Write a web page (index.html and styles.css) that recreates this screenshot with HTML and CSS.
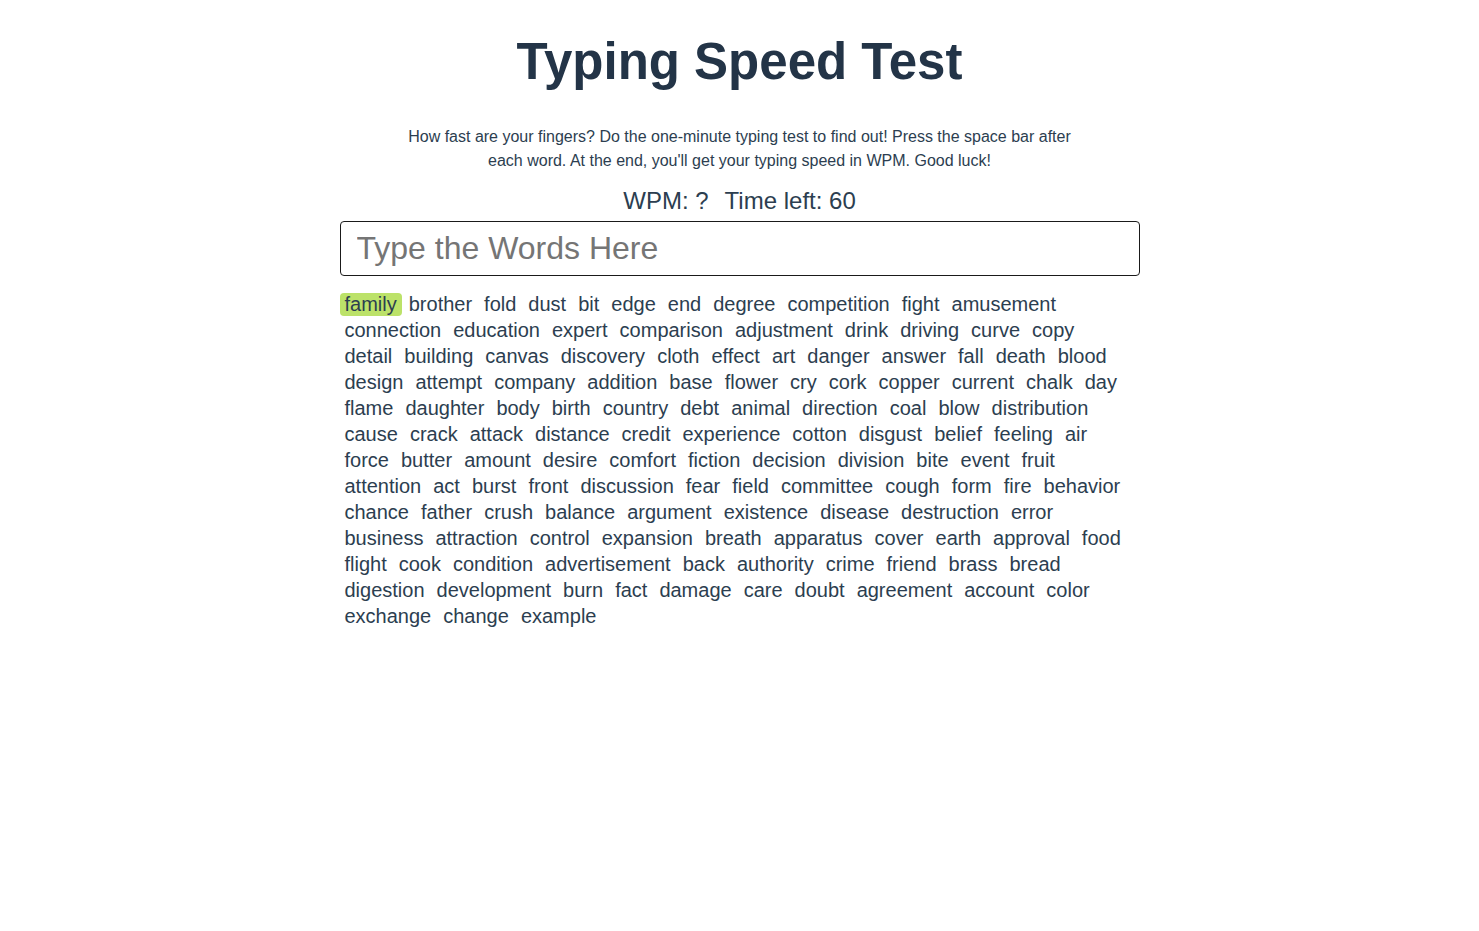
FILE: index.html
```html
<!DOCTYPE html>
<html lang="en">
<head>
<meta charset="utf-8">
<title>Typing Speed Test</title>
<link rel="stylesheet" href="styles.css">
</head>
<body>
<main class="app">
  <h1 class="title">Typing Speed Test</h1>
  <p class="intro">How fast are your fingers? Do the one-minute typing test to find out! Press the space bar after each word. At the end, you'll get your typing speed in WPM. Good luck!</p>
  <div class="stats"><span class="stat">WPM: ?</span><span class="stat">Time left: 60</span></div>
  <input class="entry" type="text" placeholder="Type the Words Here">
  <div class="words">
    <span class="word current">family</span><span class="word">brother</span><span class="word">fold</span><span class="word">dust</span><span class="word">bit</span><span class="word">edge</span><span class="word">end</span><span class="word">degree</span><span class="word">competition</span><span class="word">fight</span><span class="word">amusement</span><span class="word">connection</span><span class="word">education</span><span class="word">expert</span><span class="word">comparison</span><span class="word">adjustment</span><span class="word">drink</span><span class="word">driving</span><span class="word">curve</span><span class="word">copy</span><span class="word">detail</span><span class="word">building</span><span class="word">canvas</span><span class="word">discovery</span><span class="word">cloth</span><span class="word">effect</span><span class="word">art</span><span class="word">danger</span><span class="word">answer</span><span class="word">fall</span><span class="word">death</span><span class="word">blood</span><span class="word">design</span><span class="word">attempt</span><span class="word">company</span><span class="word">addition</span><span class="word">base</span><span class="word">flower</span><span class="word">cry</span><span class="word">cork</span><span class="word">copper</span><span class="word">current</span><span class="word">chalk</span><span class="word">day</span><span class="word">flame</span><span class="word">daughter</span><span class="word">body</span><span class="word">birth</span><span class="word">country</span><span class="word">debt</span><span class="word">animal</span><span class="word">direction</span><span class="word">coal</span><span class="word">blow</span><span class="word">distribution</span><span class="word">cause</span><span class="word">crack</span><span class="word">attack</span><span class="word">distance</span><span class="word">credit</span><span class="word">experience</span><span class="word">cotton</span><span class="word">disgust</span><span class="word">belief</span><span class="word">feeling</span><span class="word">air</span><span class="word">force</span><span class="word">butter</span><span class="word">amount</span><span class="word">desire</span><span class="word">comfort</span><span class="word">fiction</span><span class="word">decision</span><span class="word">division</span><span class="word">bite</span><span class="word">event</span><span class="word">fruit</span><span class="word">attention</span><span class="word">act</span><span class="word">burst</span><span class="word">front</span><span class="word">discussion</span><span class="word">fear</span><span class="word">field</span><span class="word">committee</span><span class="word">cough</span><span class="word">form</span><span class="word">fire</span><span class="word">behavior</span><span class="word">chance</span><span class="word">father</span><span class="word">crush</span><span class="word">balance</span><span class="word">argument</span><span class="word">existence</span><span class="word">disease</span><span class="word">destruction</span><span class="word">error</span><span class="word">business</span><span class="word">attraction</span><span class="word">control</span><span class="word">expansion</span><span class="word">breath</span><span class="word">apparatus</span><span class="word">cover</span><span class="word">earth</span><span class="word">approval</span><span class="word">food</span><span class="word">flight</span><span class="word">cook</span><span class="word">condition</span><span class="word">advertisement</span><span class="word">back</span><span class="word">authority</span><span class="word">crime</span><span class="word">friend</span><span class="word">brass</span><span class="word">bread</span><span class="word">digestion</span><span class="word">development</span><span class="word">burn</span><span class="word">fact</span><span class="word">damage</span><span class="word">care</span><span class="word">doubt</span><span class="word">agreement</span><span class="word">account</span><span class="word">color</span><span class="word">exchange</span><span class="word">change</span><span class="word">example</span>
  </div>
</main>
</body>
</html>
```

FILE: styles.css
```css
* { box-sizing: border-box; }

html, body {
  margin: 0;
  padding: 0;
  background: #ffffff;
}

body {
  font-family: "Liberation Sans", Arial, sans-serif;
  color: #2c3e50;
}

.app {
  width: 800px;
  margin: 0 auto;
  padding-top: 30px;
  display: flex;
  flex-direction: column;
  align-items: center;
}

.title {
  margin: 0;
  font-size: 51px;
  line-height: 64px;
  font-weight: 700;
  color: #233447;
}

.intro {
  margin: 31px 0 0;
  max-width: 680px;
  font-size: 16px;
  line-height: 24px;
  text-align: center;
}

.stats {
  margin-top: 13px;
  display: flex;
  gap: 16px;
  font-size: 24px;
  line-height: 30px;
}

.entry {
  margin-top: 5px;
  width: 800px;
  height: 55px;
  border: 1px solid #1a1a1a;
  border-radius: 4px;
  padding: 0 16px;
  font-family: "Liberation Sans", Arial, sans-serif;
  font-size: 32px;
  color: #2c3e50;
  outline: none;
}

.entry::placeholder {
  color: #757575;
}

.words {
  margin-top: 17px;
  width: 800px;
  display: flex;
  flex-wrap: wrap;
  row-gap: 3px;
  font-size: 20px;
  line-height: 23px;
}

.word {
  padding: 0 5px;
  margin-right: 2px;
  border-radius: 4px;
}

.word.current {
  background: #bce269;
}
```
